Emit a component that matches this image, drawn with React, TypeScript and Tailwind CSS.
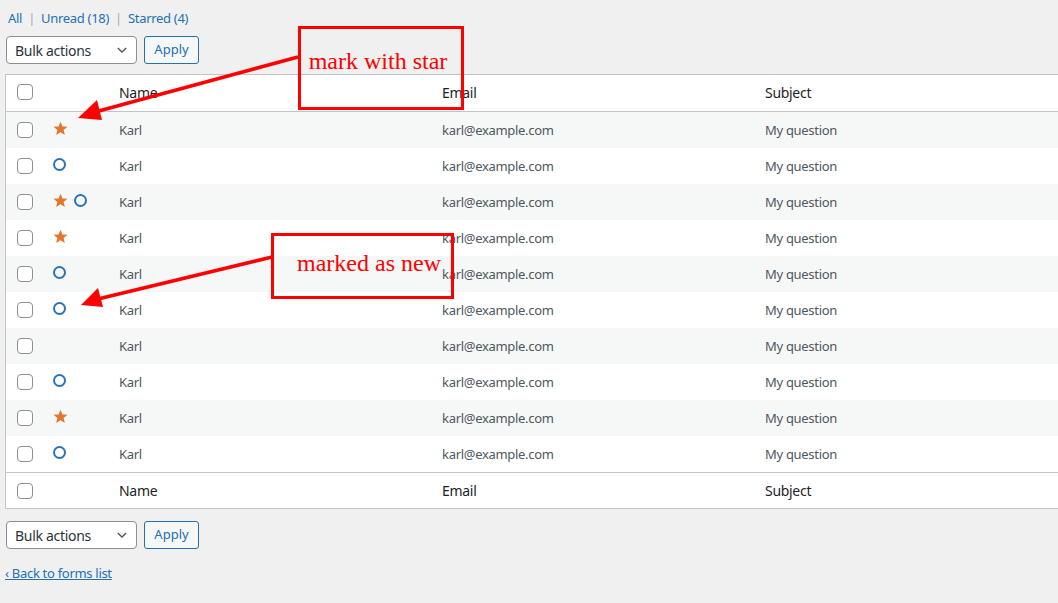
import React from "react";

const font = { fontFamily: '"Noto Sans", "Open Sans", sans-serif' };
const serif = { fontFamily: '"Liberation Serif", "Times New Roman", serif' };

const rows = [
  { star: true, isNew: false },
  { star: false, isNew: true },
  { star: true, isNew: true },
  { star: true, isNew: false },
  { star: false, isNew: true },
  { star: false, isNew: true },
  { star: false, isNew: false },
  { star: false, isNew: true },
  { star: true, isNew: false },
  { star: false, isNew: true },
];

function Star() {
  return (
    <svg width="15" height="15" viewBox="0 0 20 20" className="shrink-0">
      <path d="M10 1l2.6 6.2 6.7.5-5.1 4.4 1.6 6.5L10 15.1l-5.8 3.5 1.6-6.5L.7 7.7l6.7-.5z" fill="#e27730" />
    </svg>
  );
}

function Ring() {
  return <span className="inline-block w-[13px] h-[13px] rounded-full border-[2.5px] border-[#2b73b6] shrink-0" />;
}

function Checkbox() {
  return <span className="block w-4 h-4 rounded-[4px] border border-[#8c8f94] bg-white" />;
}

function BulkBar() {
  return (
    <div className="flex items-center gap-[7px]">
      <div className="w-[131px] h-[28px] rounded-[4px] border border-[#8c8f94] bg-white flex items-center justify-between pl-[8px] pr-[7px] text-[14px] text-[#2c3338] tracking-[-0.3px]">
        <span>Bulk actions</span>
        <svg width="14" height="14" viewBox="0 0 20 20">
          <path d="M4 7l6 6 6-6" fill="none" stroke="#50575e" strokeWidth="2" />
        </svg>
      </div>
      <button className="h-[28px] w-[55px] rounded-[3px] border border-[#2271b1] bg-[#f6f7f7] text-[#2271b1] text-[13px]">
        Apply
      </button>
    </div>
  );
}

function HeadRow({ cls }: { cls: string }) {
  return (
    <div className={`flex items-center ${cls} border-[#c3c4c7] text-[14px] text-[#1d2327] tracking-[-0.3px]`}>
      <div className="w-[44px] pl-[11px]"><Checkbox /></div>
      <div className="w-[65px]" />
      <div className="w-[323px] pl-[4px]">Name</div>
      <div className="w-[323px] pl-[4px]">Email</div>
      <div className="pl-[4px]">Subject</div>
    </div>
  );
}

export default function App() {
  return (
    <div className="relative w-[1058px] h-[603px] overflow-hidden bg-[#f0f0f1]" style={font}>
      <div className="pt-[9px] pl-[8px] text-[13px] flex items-center gap-[6px] text-[#2271b1] leading-[18px] tracking-[-0.3px]">
        <span>All</span>
        <span className="text-[#a7aaad]">|</span>
        <span>Unread (18)</span>
        <span className="text-[#a7aaad]">|</span>
        <span>Starred (4)</span>
      </div>

      <div className="pl-[6px] pt-[9px]">
        <BulkBar />
      </div>

      <div className="ml-[5px] mt-[10px] w-[1080px] border border-[#c3c4c7] bg-white">
        <HeadRow cls="h-[37px] pb-[2px] border-b" />
        {rows.map((r, i) => (
          <div
            key={i}
            className={`flex items-center h-[36px] text-[13px] text-[#50575e] tracking-[-0.3px] ${i % 2 === 0 ? "bg-[#f6f7f7]" : "bg-white"}`}
          >
            <div className="w-[44px] pl-[11px]"><Checkbox /></div>
            <div className="w-[65px] flex items-center gap-[6px] pl-[3px] -mt-[4px]">
              {r.star && <Star />}
              {r.isNew && <Ring />}
            </div>
            <div className="w-[323px] pl-[4px] pt-[2px]">Karl</div>
            <div className="w-[323px] pl-[4px] pt-[2px]">karl@example.com</div>
            <div className="pl-[4px] pt-[2px]">My question</div>
          </div>
        ))}
        <HeadRow cls="h-[36px] border-t" />
      </div>

      <div className="pl-[6px] pt-[12px]">
        <BulkBar />
      </div>

      <div className="pl-[5px] pt-[15px] text-[13px] tracking-[-0.3px]">
        <span className="text-[#2271b1] underline">‹ Back to forms list</span>
      </div>

      {/* annotations */}
      <div
        className="absolute left-[298px] top-[26px] w-[166px] h-[84px] border-[3px] border-[#ff0000] flex items-start justify-center pt-[14px] pr-[6px] text-[#ff0000] text-[24px]"
        style={serif}
      >
        mark with star
      </div>
      <div
        className="absolute left-[271px] top-[233px] w-[183px] h-[66px] border-[3px] border-[#ff0000] flex items-start justify-center pt-[9px] pl-[13px] text-[#ff0000] text-[24px]"
        style={serif}
      >
        marked as new
      </div>
      <svg className="absolute left-0 top-0 pointer-events-none" width="1058" height="603">
        <line x1="298" y1="57" x2="95" y2="112" stroke="#ff0000" strokeWidth="3.5" />
        <polygon points="78,118 97,100 102,120" fill="#ff0000" />
        <line x1="272" y1="257" x2="98" y2="299" stroke="#ff0000" strokeWidth="3.5" />
        <polygon points="81,305 98,288 103,307" fill="#ff0000" />
      </svg>
    </div>
  );
}
